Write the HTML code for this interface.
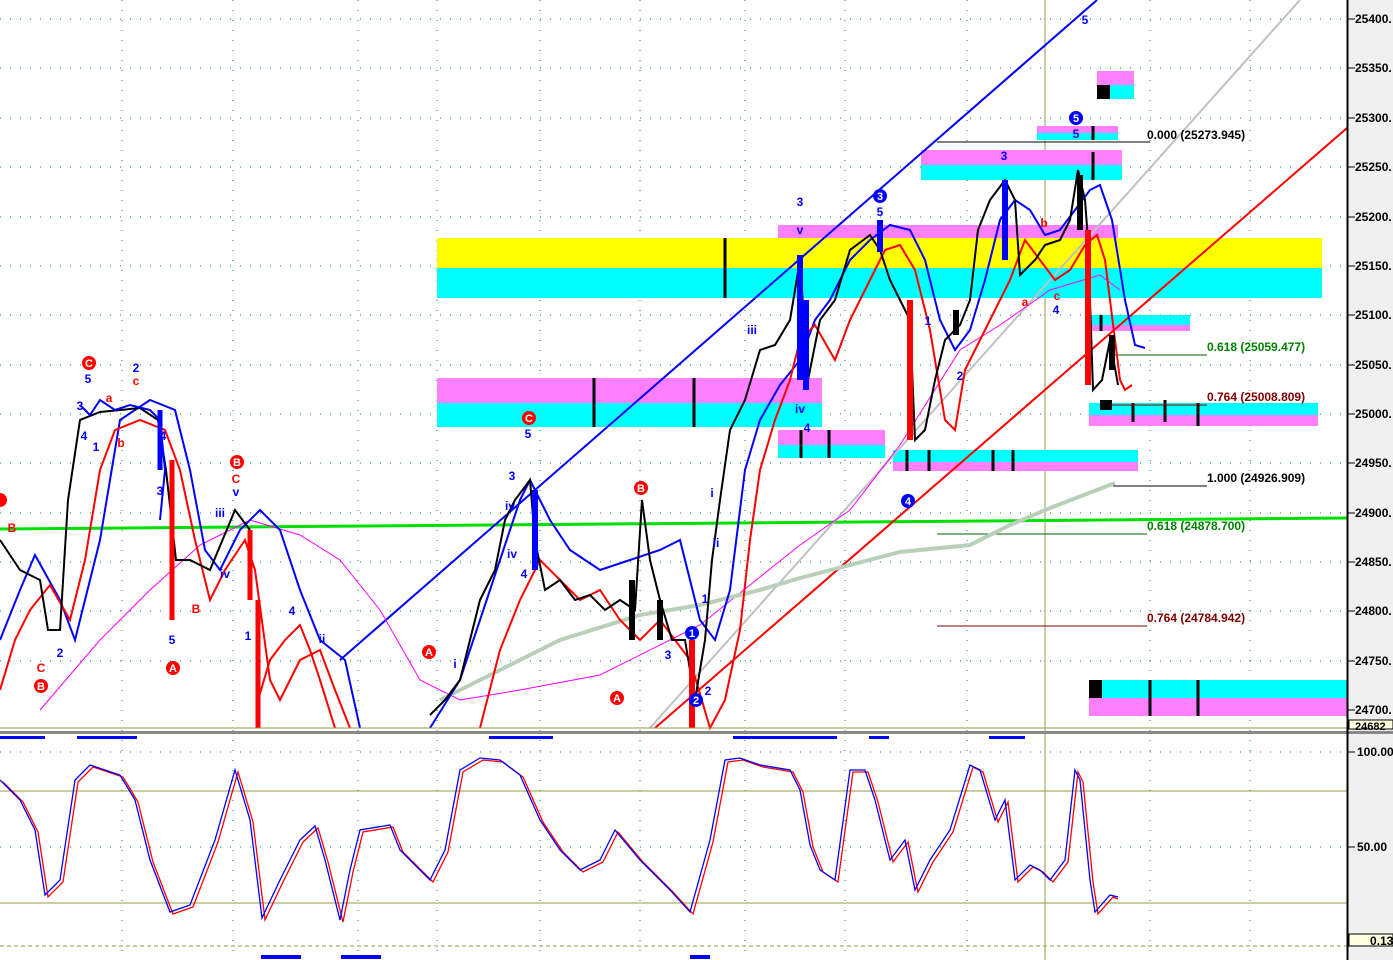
<!DOCTYPE html>
<html><head><meta charset="utf-8"><style>
html,body{margin:0;padding:0;background:#fff;overflow:hidden}
svg{display:block}
text{font-family:"Liberation Sans",sans-serif}
</style></head><body>
<svg width="1393" height="960" viewBox="0 0 1393 960" xmlns="http://www.w3.org/2000/svg">
<rect width="1393" height="960" fill="#fff"/>
<!-- axis background -->
<rect x="1348" y="0" width="45" height="960" fill="#f0f0f0"/>
<g stroke="#0a7a7a" stroke-width="1" stroke-dasharray="1,9">
<line x1="0" y1="19" x2="1346" y2="19"/><line x1="0" y1="68" x2="1346" y2="68"/><line x1="0" y1="118" x2="1346" y2="118"/><line x1="0" y1="167" x2="1346" y2="167"/><line x1="0" y1="217" x2="1346" y2="217"/><line x1="0" y1="266" x2="1346" y2="266"/><line x1="0" y1="315" x2="1346" y2="315"/><line x1="0" y1="365" x2="1346" y2="365"/><line x1="0" y1="414" x2="1346" y2="414"/><line x1="0" y1="463" x2="1346" y2="463"/><line x1="0" y1="513" x2="1346" y2="513"/><line x1="0" y1="562" x2="1346" y2="562"/><line x1="0" y1="611" x2="1346" y2="611"/><line x1="0" y1="661" x2="1346" y2="661"/>
<line x1="0" y1="752" x2="1346" y2="752"/><line x1="0" y1="847" x2="1346" y2="847"/>
</g>
<g stroke="#0a7a7a" stroke-width="1" stroke-dasharray="1,9">
<line x1="122" y1="0" x2="122" y2="960"/><line x1="233" y1="0" x2="233" y2="960"/><line x1="358" y1="0" x2="358" y2="960"/><line x1="437" y1="0" x2="437" y2="960"/><line x1="540" y1="0" x2="540" y2="960"/><line x1="640" y1="0" x2="640" y2="960"/><line x1="745" y1="0" x2="745" y2="960"/><line x1="845" y1="0" x2="845" y2="960"/><line x1="967" y1="0" x2="967" y2="960"/><line x1="1150" y1="0" x2="1150" y2="960"/><line x1="1250" y1="0" x2="1250" y2="960"/>
</g>
<line x1="1045" y1="0" x2="1045" y2="960" stroke="#999944" stroke-width="1"/>
<!-- zones -->
<rect x="437" y="238" width="885" height="30" fill="#ffff00"/>
<rect x="437" y="268" width="885" height="30" fill="#00ffff"/>
<rect x="778" y="225" width="340" height="13" fill="#ff80ff"/>
<rect x="921" y="150" width="201" height="15" fill="#ff80ff"/>
<rect x="921" y="165" width="201" height="15" fill="#00ffff"/>
<rect x="1037" y="126" width="81" height="7" fill="#ff80ff"/>
<rect x="1037" y="133" width="81" height="7" fill="#00ffff"/>
<rect x="1097" y="71" width="37" height="14" fill="#ff80ff"/>
<rect x="1097" y="85" width="37" height="14" fill="#00ffff"/>
<rect x="1097" y="85" width="13" height="14" fill="#000"/>
<rect x="437" y="378" width="385" height="25" fill="#ff80ff"/>
<rect x="437" y="403" width="385" height="24" fill="#00ffff"/>
<rect x="778" y="430" width="107" height="15" fill="#ff80ff"/>
<rect x="778" y="445" width="107" height="13" fill="#00ffff"/>
<rect x="893" y="450" width="245" height="12" fill="#00ffff"/>
<rect x="893" y="462" width="245" height="9" fill="#ff80ff"/>
<rect x="1089" y="315" width="101" height="10" fill="#00ffff"/>
<rect x="1089" y="325" width="101" height="6" fill="#ff80ff"/>
<rect x="1089" y="403" width="229" height="12" fill="#00ffff"/>
<rect x="1089" y="415" width="229" height="11" fill="#ff80ff"/>
<rect x="1089" y="680" width="258" height="18" fill="#00ffff"/>
<rect x="1089" y="698" width="258" height="18" fill="#ff80ff"/>
<rect x="1089" y="680" width="13" height="18" fill="#000"/>
<rect x="1100" y="400" width="12" height="10" fill="#000"/>
<g stroke="#000" stroke-width="3">
<line x1="725" y1="238" x2="725" y2="298"/><line x1="594" y1="378" x2="594" y2="427"/><line x1="694" y1="378" x2="694" y2="427"/>
<line x1="801" y1="430" x2="801" y2="458"/><line x1="829" y1="430" x2="829" y2="458"/>
<line x1="907" y1="450" x2="907" y2="471"/><line x1="929" y1="450" x2="929" y2="471"/><line x1="993" y1="450" x2="993" y2="471"/><line x1="1013" y1="450" x2="1013" y2="471"/>
<line x1="1093" y1="126" x2="1093" y2="140"/><line x1="1093" y1="152" x2="1093" y2="180"/>
<line x1="1101" y1="315" x2="1101" y2="331"/><line x1="1133" y1="403" x2="1133" y2="422"/><line x1="1165" y1="400" x2="1165" y2="422"/><line x1="1198" y1="403" x2="1198" y2="426"/>
<line x1="1150" y1="680" x2="1150" y2="716"/><line x1="1198" y1="680" x2="1198" y2="716"/>
</g>
<!-- trend lines -->
<line x1="0" y1="529" x2="1347" y2="518" stroke="#00e000" stroke-width="3"/>
<line x1="650" y1="728" x2="1300" y2="0" stroke="#c0c0c0" stroke-width="2"/>
<line x1="340" y1="660" x2="1097" y2="0" stroke="#0000ff" stroke-width="2"/>
<line x1="655" y1="728" x2="1347" y2="128" stroke="#ff0000" stroke-width="2"/>
<!-- fib lines -->
<g stroke-width="1">
<line x1="937" y1="142" x2="1150" y2="142" stroke="#000"/>
<line x1="1110" y1="355" x2="1207" y2="355" stroke="#006000"/>
<line x1="1110" y1="405" x2="1207" y2="405" stroke="#800000"/>
<line x1="1113" y1="486" x2="1207" y2="486" stroke="#000"/>
<line x1="937" y1="534" x2="1147" y2="534" stroke="#006000"/>
<line x1="937" y1="626" x2="1147" y2="626" stroke="#800000"/>
</g>
<g font-size="12" font-weight="bold">
<text x="1147" y="139" fill="#000">0.000 (25273.945)</text>
<text x="1207" y="351" fill="#008000">0.618 (25059.477)</text>
<text x="1207" y="401" fill="#800000">0.764 (25008.809)</text>
<text x="1207" y="482" fill="#000">1.000 (24926.909)</text>
<text x="1147" y="530" fill="#008000">0.618 (24878.700)</text>
<text x="1147" y="622" fill="#800000">0.764 (24784.942)</text>
</g>
<!-- MAs -->
<polyline fill="none" stroke="#ff00ff" stroke-width="1" points="40,710 100,640 150,590 200,545 250,520 300,535 340,560 380,610 420,680 460,700 520,690 600,675 700,625 800,545 850,510 900,445 960,350 1000,325 1050,290 1100,275 1120,290"/>
<polyline fill="none" stroke="#b8d0b8" stroke-width="4" points="440,700 500,670 560,640 640,615 700,605 760,590 800,578 850,565 900,552 970,545 1010,525 1050,508 1115,483"/>
<!-- envelopes -->
<polyline fill="none" stroke="#0000ff" stroke-width="2" points="0,640 20,590 35,555 60,600 75,640 100,540 120,420 150,400 175,410 190,470 205,550 220,570 240,530 260,510 280,530 300,590 320,640 345,660 360,728 M"/>
<polyline fill="none" stroke="#0000ff" stroke-width="2" points="430,728 460,680 480,620 500,560 520,500 530,480 550,520 570,550 600,570 630,560 660,550 680,540 700,620 715,640 730,590 745,470 760,420 780,385 800,360 815,320 830,300 850,260 870,240 890,225 910,230 925,260 940,320 955,350 970,330 985,280 1000,220 1015,200 1030,210 1045,235 1060,230 1075,210 1090,190 1100,185 1112,220 1125,300 1135,345 1145,348"/>
<polyline fill="none" stroke="#ff0000" stroke-width="2" points="0,690 15,640 30,610 50,585 70,620 85,560 100,470 115,430 140,420 165,430 180,470 195,540 210,600 225,570 245,540 255,570 270,680 280,700 300,660 320,650 335,690 350,728"/>
<polyline fill="none" stroke="#ff0000" stroke-width="2" points="480,728 500,650 520,600 540,560 560,580 580,600 600,590 620,620 640,640 660,620 690,660 710,728 725,700 740,630 750,540 760,470 775,420 790,380 800,340 815,325 835,360 850,320 870,280 885,250 900,245 915,270 930,330 945,420 955,430 965,370 980,340 995,310 1010,280 1025,240 1040,260 1055,280 1070,270 1085,245 1097,235 1105,260 1115,340 1120,380 1125,390 1132,385"/>
<!-- price path -->
<polyline fill="none" stroke="#000" stroke-width="2" points="0,540 20,570 40,580 48,630 60,630 68,500 80,420 100,412 140,408 158,420 166,470 176,560 190,560 210,570 235,510 250,530"/>
<polyline fill="none" stroke="#ff0000" stroke-width="5" points="172,460 172,620 M"/>
<line x1="172" y1="470" x2="172" y2="620" stroke="#ff0000" stroke-width="5"/>
<line x1="250" y1="530" x2="250" y2="600" stroke="#ff0000" stroke-width="5"/>
<line x1="258" y1="600" x2="258" y2="728" stroke="#ff0000" stroke-width="5"/>
<polyline fill="none" stroke="#ff0000" stroke-width="2" points="258,700 270,660 285,640 300,625 310,650 320,680 335,728"/>
<polyline fill="none" stroke="#0000ff" stroke-width="2" points="80,405 90,415 100,400 115,410 130,405 150,410 160,420 165,470 160,520"/>
<line x1="160" y1="410" x2="160" y2="470" stroke="#0000ff" stroke-width="5"/>
<polyline fill="none" stroke="#000" stroke-width="2" points="430,715 445,700 460,680 470,640 480,600 495,570 505,520 515,500 530,480 535,540 545,590 560,580 575,600 590,595 605,610 620,600 635,610 642,500 650,560 660,600 672,640 685,640 695,700 705,640 712,560 720,500 730,430 745,400 760,350 775,345 790,320 800,260 808,380 820,320 835,300 850,250 870,235 880,250 890,280 900,300 910,320 915,440 925,430 935,380 945,340 960,325 970,300 978,230 990,200 1005,180 1015,200 1020,275 1035,260 1045,245 1060,240 1070,220 1078,170 1085,200 1088,240 1093,390 1102,380 1110,340 1118,385"/>
<g stroke-width="6">
<line x1="535" y1="490" x2="535" y2="570" stroke="#0000ff"/>
<line x1="800" y1="255" x2="800" y2="380" stroke="#0000ff"/>
<line x1="806" y1="300" x2="806" y2="390" stroke="#0000ff"/>
<line x1="880" y1="220" x2="880" y2="252" stroke="#0000ff"/>
<line x1="910" y1="300" x2="910" y2="440" stroke="#ff0000"/>
<line x1="1005" y1="180" x2="1005" y2="260" stroke="#0000ff"/>
<line x1="1088" y1="230" x2="1088" y2="385" stroke="#ff0000"/>
<line x1="1080" y1="175" x2="1080" y2="230" stroke="#000"/>
<line x1="692" y1="640" x2="692" y2="728" stroke="#ff0000"/>
<line x1="632" y1="580" x2="632" y2="640" stroke="#000"/>
<line x1="660" y1="600" x2="660" y2="640" stroke="#000"/>
<line x1="956" y1="310" x2="956" y2="335" stroke="#000"/>
<line x1="1112" y1="335" x2="1112" y2="370" stroke="#000"/>
</g>
<!-- labels -->
<g font-size="12" font-weight="bold" fill="#0000ff" text-anchor="middle">
<text x="88" y="383">5</text><text x="136" y="372">2</text><text x="80" y="410">3</text><text x="84" y="440">4</text><text x="96" y="451">1</text><text x="160" y="495">3</text><text x="163" y="440">4</text><text x="172" y="644">5</text><text x="60" y="657">2</text><text x="248" y="640">1</text><text x="292" y="615">4</text><text x="322" y="643">ii</text><text x="236" y="496">v</text><text x="220" y="517">iii</text><text x="225" y="578">iv</text>
<text x="528" y="438">5</text><text x="512" y="480">3</text><text x="510" y="510">iv</text><text x="512" y="558">iv</text><text x="524" y="578">4</text><text x="455" y="668">i</text>
<text x="800" y="206">3</text><text x="800" y="234">v</text><text x="752" y="334">iii</text><text x="800" y="413">iv</text><text x="807" y="432">4</text>
<text x="880" y="216">5</text><text x="1004" y="160">3</text><text x="1076" y="138">5</text><text x="1056" y="314">4</text><text x="928" y="325">1</text><text x="960" y="380">2</text>
<text x="705" y="603">1</text><text x="668" y="659">3</text><text x="708" y="695">2</text><text x="716" y="547">ii</text><text x="712" y="497">i</text><text x="1085" y="24">5</text>
</g>
<g font-size="12" font-weight="bold" fill="#ff0000" text-anchor="middle">
<text x="136" y="385">c</text><text x="109" y="402">a</text><text x="121" y="447">b</text><text x="41" y="672">C</text><text x="12" y="532">B</text><text x="196" y="613">B</text><text x="236" y="483">C</text><text x="1025" y="306">a</text><text x="1057" y="300">c</text><text x="1044" y="227">b</text>
</g>
<g font-size="11" font-weight="bold" text-anchor="middle">
<circle cx="89" cy="363" r="7" fill="#ff0000"/><text x="89" y="367" fill="#fff">C</text>
<circle cx="41" cy="686" r="7" fill="#ff0000"/><text x="41" y="690" fill="#fff">B</text>
<circle cx="173" cy="668" r="7" fill="#ff0000"/><text x="173" y="672" fill="#fff">A</text>
<circle cx="237" cy="462" r="7" fill="#ff0000"/><text x="237" y="466" fill="#fff">B</text>
<circle cx="0" cy="500" r="7" fill="#ff0000"/>
<circle cx="529" cy="418" r="7" fill="#ff0000"/><text x="529" y="422" fill="#fff">C</text>
<circle cx="641" cy="488" r="7" fill="#ff0000"/><text x="641" y="492" fill="#fff">B</text>
<circle cx="617" cy="698" r="7" fill="#ff0000"/><text x="617" y="702" fill="#fff">A</text>
<circle cx="429" cy="652" r="7" fill="#ff0000"/><text x="429" y="656" fill="#fff">A</text>
<circle cx="880" cy="196" r="7" fill="#0000ff"/><text x="880" y="200" fill="#fff">3</text>
<circle cx="908" cy="501" r="7" fill="#0000ff"/><text x="908" y="505" fill="#fff">4</text>
<circle cx="1076" cy="118" r="7" fill="#0000ff"/><text x="1076" y="122" fill="#fff">5</text>
<circle cx="692" cy="633" r="7" fill="#0000ff"/><text x="692" y="637" fill="#fff">1</text>
<circle cx="696" cy="700" r="7" fill="#0000ff"/><text x="696" y="704" fill="#fff">2</text>
</g>
<!-- panel separators -->
<line x1="0" y1="728" x2="1347" y2="728" stroke="#999944"/>
<rect x="0" y="731" width="1393" height="3" fill="#888"/>
<line x1="0" y1="791" x2="1347" y2="791" stroke="#999944"/>
<line x1="0" y1="903" x2="1347" y2="903" stroke="#999944"/>
<line x1="0" y1="946" x2="1347" y2="946" stroke="#999944" stroke-dasharray="4,3"/>
<g fill="#0000ff">
<rect x="0" y="736" width="45" height="3"/><rect x="77" y="736" width="60" height="3"/><rect x="489" y="736" width="64" height="3"/><rect x="733" y="736" width="104" height="3"/><rect x="869" y="736" width="20" height="3"/><rect x="989" y="736" width="36" height="3"/>
<rect x="261" y="955" width="40" height="4"/><rect x="341" y="955" width="40" height="4"/><rect x="690" y="955" width="20" height="4"/>
</g>
<!-- stochastic -->
<polyline fill="none" stroke="#ff0000" stroke-width="1.3" transform="translate(3,2)" points="0,780 20,800 35,830 45,895 60,880 75,780 90,765 120,775 135,800 150,860 170,912 190,905 215,840 235,770 250,820 262,918 280,880 300,840 315,826 325,860 340,920 350,870 360,830 390,825 400,850 430,880 445,850 460,770 480,758 500,760 520,775 540,820 560,850 580,870 600,860 615,830 640,860 670,890 690,912 710,840 725,760 740,758 760,765 790,770 800,790 810,845 820,870 835,880 850,770 865,770 875,800 890,860 905,840 915,890 930,860 950,830 970,765 980,770 995,820 1005,800 1015,880 1030,865 1040,870 1050,880 1065,860 1075,770 1080,780 1090,880 1095,912 1110,895 1115,897"/>
<polyline fill="none" stroke="#0000ff" stroke-width="1.3" points="0,780 20,800 35,830 45,895 60,880 75,780 90,765 120,775 135,800 150,860 170,912 190,905 215,840 235,770 250,820 262,918 280,880 300,840 315,826 325,860 340,920 350,870 360,830 390,825 400,850 430,880 445,850 460,770 480,758 500,760 520,775 540,820 560,850 580,870 600,860 615,830 640,860 670,890 690,912 710,840 725,760 740,758 760,765 790,770 800,790 810,845 820,870 835,880 850,770 865,770 875,800 890,860 905,840 915,890 930,860 950,830 970,765 980,770 995,820 1005,800 1015,880 1030,865 1040,870 1050,880 1065,860 1075,770 1080,780 1090,880 1095,912 1110,895 1118,897"/>
<!-- axis -->
<line x1="1347.5" y1="0" x2="1347.5" y2="960" stroke="#000" stroke-width="2"/>
<g stroke="#000"><line x1="1348" y1="19" x2="1355" y2="19"/><line x1="1348" y1="68" x2="1355" y2="68"/><line x1="1348" y1="118" x2="1355" y2="118"/><line x1="1348" y1="167" x2="1355" y2="167"/><line x1="1348" y1="217" x2="1355" y2="217"/><line x1="1348" y1="266" x2="1355" y2="266"/><line x1="1348" y1="315" x2="1355" y2="315"/><line x1="1348" y1="365" x2="1355" y2="365"/><line x1="1348" y1="414" x2="1355" y2="414"/><line x1="1348" y1="463" x2="1355" y2="463"/><line x1="1348" y1="513" x2="1355" y2="513"/><line x1="1348" y1="562" x2="1355" y2="562"/><line x1="1348" y1="611" x2="1355" y2="611"/><line x1="1348" y1="661" x2="1355" y2="661"/><line x1="1348" y1="710" x2="1355" y2="710"/><line x1="1348" y1="752" x2="1355" y2="752"/><line x1="1348" y1="847" x2="1355" y2="847"/></g>
<g font-size="12" font-weight="bold" fill="#000">
<text x="1355" y="23">25400.</text><text x="1355" y="72">25350.</text><text x="1355" y="122">25300.</text><text x="1355" y="171">25250.</text><text x="1355" y="221">25200.</text><text x="1355" y="270">25150.</text><text x="1355" y="319">25100.</text><text x="1355" y="369">25050.</text><text x="1355" y="418">25000.</text><text x="1355" y="467">24950.</text><text x="1355" y="517">24900.</text><text x="1355" y="566">24850.</text><text x="1355" y="615">24800.</text><text x="1355" y="665">24750.</text><text x="1355" y="714">24700.</text><text x="1357" y="756">100.00</text><text x="1357" y="851">50.00</text>
</g>
<rect x="1349" y="720" width="44" height="9" fill="#ffffe0" stroke="#000"/>
<text x="1355" y="730" font-size="11" font-weight="bold">24682</text>
<rect x="1349" y="934" width="44" height="12" fill="#ffffe0" stroke="#000"/>
<text x="1370" y="945" font-size="12" font-weight="bold">0.13</text>
</svg>
</body></html>
